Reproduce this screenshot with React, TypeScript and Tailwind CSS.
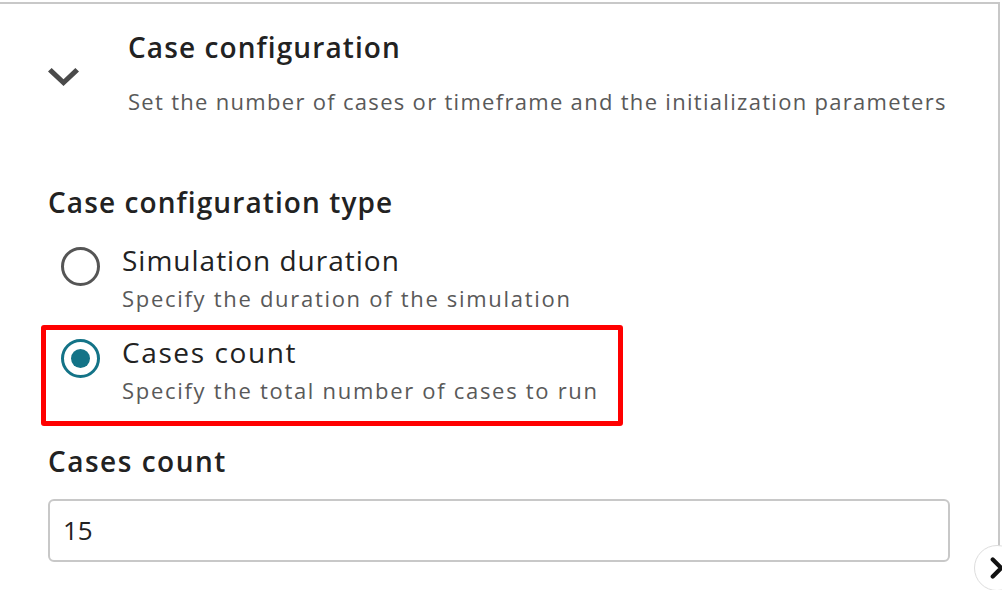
import { ChevronRight } from "lucide-react"

function RadioOption({
  checked,
  label,
  hint,
  labelTracking,
}: {
  checked: boolean
  label: string
  hint: string
  labelTracking: string
}) {
  return (
    <div className="flex items-start">
      <div className="w-[74px] pl-[13px] pt-[5px] shrink-0">
        {checked ? (
          <div className="w-[39px] h-[39px] rounded-full border-[3px] border-[#137387] flex items-center justify-center">
            <div className="w-[19px] h-[19px] rounded-full bg-[#137387]" />
          </div>
        ) : (
          <div className="w-[39px] h-[39px] rounded-full border-[3px] border-[#555555]" />
        )}
      </div>
      <div>
        <div className={`text-[28px] leading-[36px] text-[#222222] ${labelTracking}`}>{label}</div>
        <div className="mt-[5px] text-[22px] leading-[30px] tracking-[1.7px] text-[#595959]">{hint}</div>
      </div>
    </div>
  )
}

export default function App() {
  return (
    <div className="w-[1002px] h-[590px] overflow-hidden bg-white relative font-['Open_Sans',sans-serif]">
      <div className="mt-[2px] w-[1000px] h-[700px] border-t-2 border-r-2 border-[#c8c8c8] pl-[48px] pt-[25px]">
        {/* header */}
        <div className="flex items-center">
          <div className="w-[80px] shrink-0 pt-[8px]">
            <svg width="31" height="18" viewBox="6 8.59 12 7.41" preserveAspectRatio="none">
              <path d="M16.59 8.59 12 13.17 7.41 8.59 6 10l6 6 6-6z" fill="#4a4a4a" />
            </svg>
          </div>
          <div>
            <div className="text-[28px] leading-[36px] tracking-[1.1px] font-semibold text-[#222222]">Case configuration</div>
            <div className="mt-[21px] text-[22px] leading-[30px] tracking-[1.3px] text-[#595959]">
              Set the number of cases or timeframe and the initialization parameters
            </div>
          </div>
        </div>

        {/* type */}
        <div className="mt-[68px] text-[28px] leading-[36px] tracking-[1.1px] font-semibold text-[#222222]">
          Case configuration type
        </div>

        <div className="mt-[22px]">
          <RadioOption
            checked={false}
            label="Simulation duration"
            hint="Specify the duration of the simulation"
            labelTracking="tracking-[1px]"
          />
        </div>

        <div className="mt-[12px] -ml-[7px] w-[582px] h-[101px] border-[5px] border-[#ff0000] rounded-[3px] pl-[2px] pt-[4px]">
          <RadioOption
            checked={true}
            label="Cases count"
            hint="Specify the total number of cases to run"
            labelTracking="tracking-[1.6px]"
          />
        </div>

        <div className="mt-[17px] text-[28px] leading-[36px] tracking-[1.5px] font-semibold text-[#222222]">Cases count</div>
        <div className="mt-[20px] w-[902px] h-[63px] border-2 border-[#c8c8c8] rounded-[6px] flex items-center px-[13px] pb-[2px]">
          <span className="text-[26px] leading-[36px] text-[#222222]">15</span>
        </div>
      </div>

      <div className="absolute left-[974px] top-[545px] w-[46px] h-[46px] rounded-full bg-white border-[1.5px] border-[#dddddd] flex items-center justify-center">
        <ChevronRight size={34} strokeWidth={3} color="#111111" />
      </div>
    </div>
  )
}
